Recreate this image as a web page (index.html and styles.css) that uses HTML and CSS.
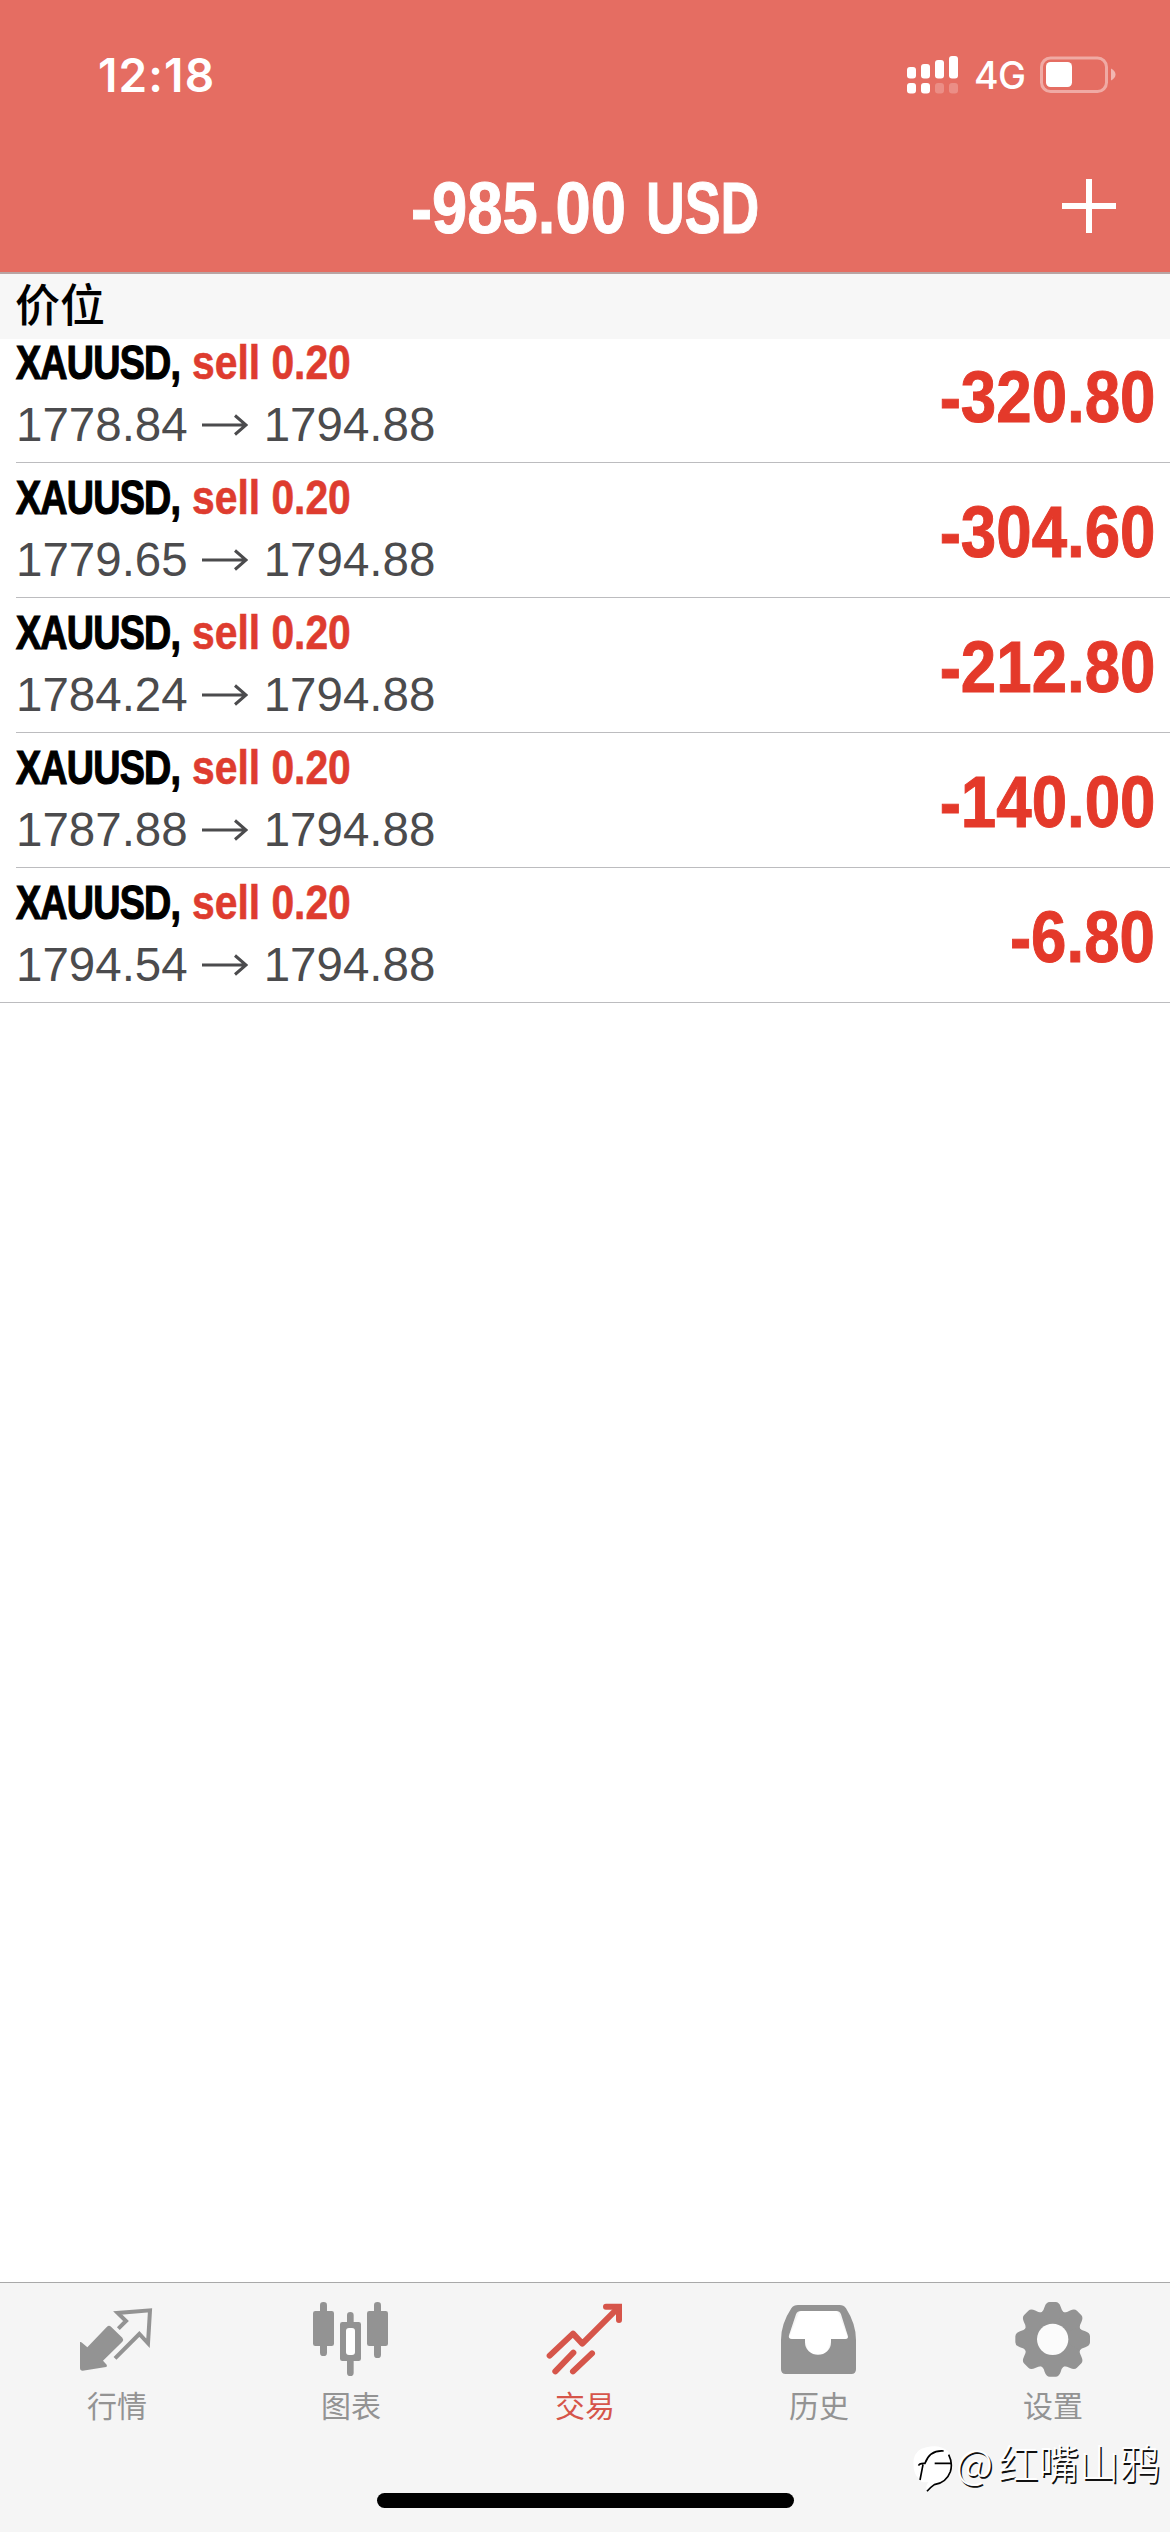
FILE: index.html
```html
<!DOCTYPE html>
<html lang="zh-CN">
<head>
<meta charset="utf-8">
<title>交易</title>
<link rel="stylesheet" href="styles.css">
</head>
<body>
<div class="screen">
  <header class="top">
    <div class="status">
      <span class="clock">12:18</span>
      <div class="status-right">
        <svg class="signal" width="52" height="38" viewBox="0 0 52 38" fill="#fff">
          <rect x="0" y="11" width="9" height="11.500" rx="3"/>
          <rect x="14" y="8" width="9" height="14.500" rx="3"/>
          <rect x="28" y="4" width="9" height="18.500" rx="3"/>
          <rect x="42" y="0" width="9" height="22.500" rx="3"/>
          <rect x="0" y="27" width="9" height="10.500" rx="3"/>
          <rect x="14" y="27" width="9" height="10.500" rx="3"/>
          <rect x="28" y="27" width="9" height="10.500" rx="3" opacity=".23"/>
          <rect x="42" y="27" width="9" height="10.500" rx="3" opacity=".23"/>
        </svg>
        <span class="network">4G</span>
        <svg class="battery" width="76" height="38" viewBox="0 0 76 38">
          <rect x="1.500" y="2" width="65" height="33.500" rx="9" fill="none" stroke="#fff" stroke-opacity=".42" stroke-width="3"/>
          <rect x="6" y="6" width="26" height="25" rx="4.500" fill="#fff"/>
          <path d="M71 12.500q4.500 2.500 4.500 6t-4.500 6z" fill="#fff" fill-opacity=".5"/>
        </svg>
      </div>
    </div>
    <div class="navbar">
      <h1 class="total"><span class="total-value">-985.00</span><span class="total-currency">USD</span></h1>
      <svg class="plus" width="54" height="54" viewBox="0 0 54 54"><path d="M27 0v54M0 27h54" stroke="#fff" stroke-width="6"/></svg>
    </div>
  </header>

  <h2 class="section">价位</h2>

  <main class="positions">
    <div class="row">
      <div class="info">
        <div class="title"><span class="symbol">XAUUSD,</span><span class="side">sell 0.20</span></div>
        <div class="prices"><span>1778.84</span><svg class="arrow" viewBox="0 0 46 22"><path d="M0 11h44M33 1.500L44 11L33 20.500"/></svg><span>1794.88</span></div>
      </div>
      <span class="profit">-320.80</span>
    </div>
    <div class="row">
      <div class="info">
        <div class="title"><span class="symbol">XAUUSD,</span><span class="side">sell 0.20</span></div>
        <div class="prices"><span>1779.65</span><svg class="arrow" viewBox="0 0 46 22"><path d="M0 11h44M33 1.500L44 11L33 20.500"/></svg><span>1794.88</span></div>
      </div>
      <span class="profit">-304.60</span>
    </div>
    <div class="row">
      <div class="info">
        <div class="title"><span class="symbol">XAUUSD,</span><span class="side">sell 0.20</span></div>
        <div class="prices"><span>1784.24</span><svg class="arrow" viewBox="0 0 46 22"><path d="M0 11h44M33 1.500L44 11L33 20.500"/></svg><span>1794.88</span></div>
      </div>
      <span class="profit">-212.80</span>
    </div>
    <div class="row">
      <div class="info">
        <div class="title"><span class="symbol">XAUUSD,</span><span class="side">sell 0.20</span></div>
        <div class="prices"><span>1787.88</span><svg class="arrow" viewBox="0 0 46 22"><path d="M0 11h44M33 1.500L44 11L33 20.500"/></svg><span>1794.88</span></div>
      </div>
      <span class="profit">-140.00</span>
    </div>
    <div class="row last">
      <div class="info">
        <div class="title"><span class="symbol">XAUUSD,</span><span class="side">sell 0.20</span></div>
        <div class="prices"><span>1794.54</span><svg class="arrow" viewBox="0 0 46 22"><path d="M0 11h44M33 1.500L44 11L33 20.500"/></svg><span>1794.88</span></div>
      </div>
      <span class="profit">-6.80</span>
    </div>
  </main>

  <footer class="bottom">
    <nav class="tabs">
      <div class="tab">
        <svg class="icon" viewBox="231 114 240 240">
          <path fill="currentColor" d="M240 246q3-1 6 2l16 14 59-62q6-5 12 0l34 33q5 6 0 12l-58 57 11 12q3 5-2 7l-70 11q-8 0-8-8z"/>
          <path fill="none" stroke="currentColor" stroke-width="12" d="M355 206L378 183L353 159L450 151L444 250L418 222L345 295"/>
        </svg>
        <span>行情</span>
      </div>
      <div class="tab">
        <svg class="icon" viewBox="933 114 240 240">
          <g fill="currentColor">
            <rect x="960" y="126" width="21" height="162" rx="10"/>
            <rect x="939" y="153" width="63" height="105" rx="7"/>
            <rect x="1122" y="126" width="21" height="168" rx="10"/>
            <rect x="1101" y="153" width="63" height="105" rx="7"/>
            <path d="M1041 186v-20a10 10 0 0 1 20 0v20h15q7 0 7 7v103q0 7-7 7h-15v35a10 10 0 0 1-20 0v-35h-14q-7 0-7-7V193q0-7 7-7z"/>
          </g>
          <rect x="1038" y="204" width="27" height="81" rx="9" fill="#fff"/>
        </svg>
        <span>图表</span>
      </div>
      <div class="tab active">
        <svg class="icon" viewBox="195 114 240 240">
          <g fill="none" stroke="currentColor" stroke-width="18" stroke-linecap="round">
            <path stroke-linejoin="round" d="M209 287L279 221L307 251L412 146"/>
            <path d="M378 140H417V180"/>
            <path d="M226 334L280 278M279 334L336 280"/>
          </g>
          <path fill="currentColor" d="M392 132h26q8 0 8 8v28z"/>
        </svg>
        <span>交易</span>
      </div>
      <div class="tab">
        <svg class="icon" viewBox="897 114 240 240">
          <path fill="#fff" d="M960 150H1072L1106 240H1054L1040 280L1015 287L985 275L974 240H924Z"/>
          <path fill="currentColor" fill-rule="evenodd" d="M954 135H1079Q1091 135 1098 145Q1128 192 1128 240V328Q1128 342 1114 342H917Q903 342 903 328V240Q903 192 934 145Q941 135 954 135ZM963 153Q952 153 948 163L927 226Q924 237 936 237H975V248A39 36 0 0 0 1053 248V237H1096Q1107 237 1103 226L1083 163Q1079 153 1069 153Z"/>
        </svg>
        <span>历史</span>
      </div>
      <div class="tab">
        <svg class="icon" viewBox="459 114 240 240">
          <g fill="currentColor">
            <circle cx="578" cy="238" r="88"/>
            <g id="teeth">
              <path id="tooth" d="M544 158Q551 152 554 140Q559 126 569 126H587Q597 126 602 140Q605 152 612 158L604 190H552Z"/>
              <use href="#tooth" transform="rotate(45 578 238)"/>
              <use href="#tooth" transform="rotate(90 578 238)"/>
              <use href="#tooth" transform="rotate(135 578 238)"/>
            </g>
            <use href="#teeth" transform="rotate(180 578 238)"/>
          </g>
          <circle cx="578" cy="238" r="47" fill="#fbfbfb"/>
        </svg>
        <span>设置</span>
      </div>
    </nav>
    <div class="home-indicator"></div>
  </footer>

  <div class="watermark">
    <svg class="watermark-logo" viewBox="40 75 120 150" fill="none">
      <path d="M42 118Q48 88 80 82Q120 72 145 94Q162 125 150 165Q138 188 100 198L82 212Q76 200 86 186Q62 190 58 176Q38 160 42 118Z" fill="#fff"/>
      <path stroke="#000" stroke-width="5" d="M57 137Q58 129 76 130Q90 90 132 93M70 134L61 180M105 130H156"/>
      <path stroke="#000" stroke-width="5" d="M147 104Q160 130 152 155Q140 188 104 194Q92 202 82 214"/>
    </svg>
    <span class="watermark-at">@</span><span>红嘴山鸦</span>
  </div>
</div>
</body>
</html>
```
FILE: styles.css
```css
* { box-sizing: border-box; margin: 0; padding: 0; }

body {
  width: 1170px;
  height: 2532px;
  background: #fff;
  font-family: "Liberation Sans", "Noto Sans CJK SC", sans-serif;
}

svg { display: block; flex: none; }

.screen {
  position: relative;
  display: flex;
  flex-direction: column;
  width: 1170px;
  height: 2532px;
  overflow: hidden;
}

.top {
  height: 274px;
  background: #e56d62;
  border-bottom: 2px solid #b9a5a4;
  color: #fff;
}

.status {
  display: flex;
  justify-content: space-between;
  height: 140px;
  padding: 56px 54px 0 98px;
  font-family: Inter, sans-serif;
}

.clock {
  font-size: 46px;
  font-weight: 600;
  line-height: 38px;
  letter-spacing: 1.1px;
}

.status-right { display: flex; height: 38px; }

.network {
  width: 50px;
  margin: 0 16px 0 15px;
  font-size: 37.500px;
  font-weight: 500;
  line-height: 40px;
  letter-spacing: -0.5px;
}

.navbar {
  display: grid;
  grid-template-columns: 1fr auto 1fr;
  grid-template-rows: 132px;
  align-items: start;
  height: 132px;
  padding: 0 54px 0 0;
}

.total {
  display: flex;
  grid-column: 2;
  width: 350px;
  margin-left: 56px;
  font-size: 72px;
  line-height: 136px;
  white-space: nowrap;
}

.total-value,
.total-currency {
  transform-origin: left;
  -webkit-text-stroke: 1px currentColor;
}

.total-value {
  width: 235px;
  transform: scaleX(0.88);
}

.total-currency { transform: scaleX(0.745); }

.plus {
  justify-self: end;
  margin-top: 39px;
}

.section {
  z-index: 1;
  height: 65px;
  padding-left: 15px;
  background: #f7f7f7;
  font-size: 45px;
  font-weight: 500;
  line-height: 66px;
}

.positions { margin-top: -11px; }

.row {
  display: flex;
  justify-content: space-between;
  height: 135px;
  margin-left: 16px;
  padding-right: 15px;
  border-bottom: 1px solid #bcbcbf;
}

.row.last {
  margin-left: 0;
  padding-left: 16px;
}

.info { padding-top: 7px; }

.title {
  display: flex;
  height: 62px;
  font-size: 48px;
  font-weight: 700;
  line-height: 56px;
  white-space: nowrap;
}

.symbol {
  width: 176px;
  transform: scaleX(0.785);
  transform-origin: left;
  letter-spacing: -1px;
  -webkit-text-stroke: 1.200px currentColor;
}

.side {
  color: #de3c2f;
  transform: scaleX(0.85);
  transform-origin: left;
  -webkit-text-stroke: 0.600px currentColor;
}

.prices {
  display: flex;
  align-items: center;
  height: 56px;
  color: #4b4b4d;
  font-size: 47.5px;
  line-height: 56px;
}

.arrow {
  width: 46px;
  height: 22px;
  margin: 0 16px 0 14px;
  fill: none;
  stroke: #4b4b4d;
  stroke-width: 3;
}

.profit {
  color: #e4392a;
  font-size: 71.500px;
  font-weight: 700;
  line-height: 138px;
  transform: scaleX(0.89);
  transform-origin: right;
  -webkit-text-stroke: 1px currentColor;
}

.bottom {
  height: 250px;
  margin-top: auto;
  background: #f5f5f5;
  border-top: 1px solid #a9a9a9;
}

.tabs {
  display: grid;
  grid-template-columns: repeat(5, 1fr);
  height: 210px;
}

.tab {
  display: flex;
  flex-direction: column;
  align-items: center;
  padding-top: 15px;
  color: #939393;
  font-size: 30px;
  line-height: 44px;
}

.tab span { margin-top: 7px; }

.tab.active { color: #d6554a; }

.icon { width: 80px; height: 80px; }

.home-indicator {
  width: 417px;
  height: 15px;
  margin: 0 auto;
  border-radius: 8px;
  background: #000;
}

.watermark {
  position: absolute;
  left: 913px;
  top: 2436px;
  display: flex;
  color: #fff;
  font-family: "Noto Sans CJK SC", sans-serif;
  font-size: 40.500px;
  font-weight: 300;
  line-height: 52px;
  text-shadow: 1.500px 1.500px 0.500px #111;
}

.watermark-logo {
  width: 40px;
  height: 50px;
  margin: 9px 3px 0 0;
}

.watermark-at { width: 42px; }
```
